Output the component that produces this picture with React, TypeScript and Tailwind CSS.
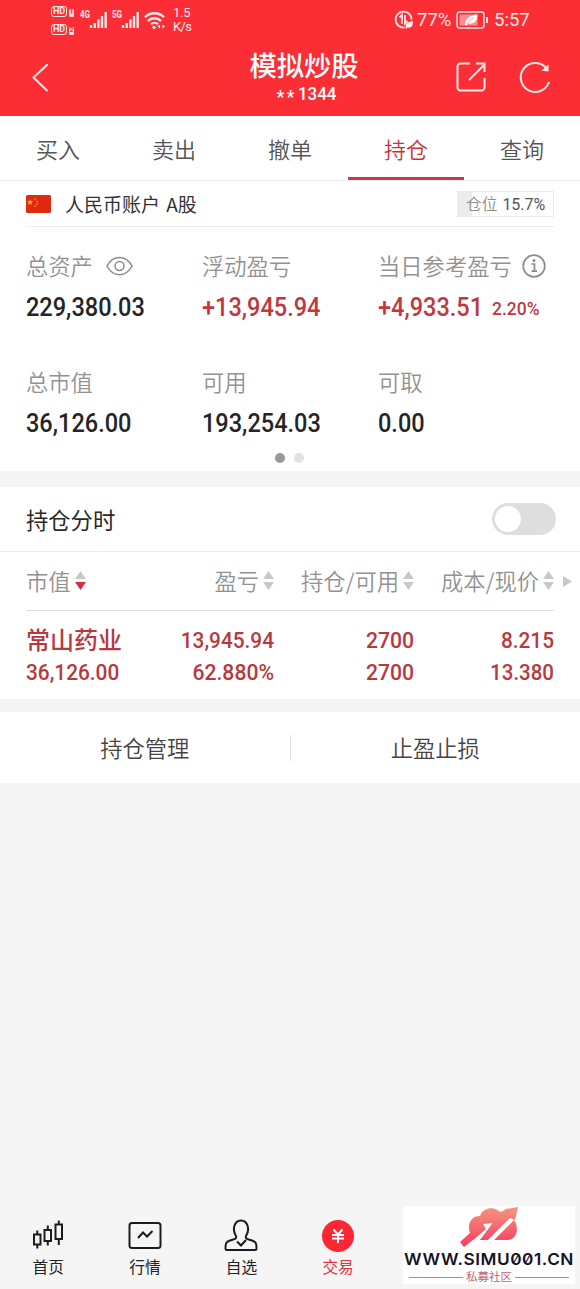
import type { ReactNode } from "react";

const tabs = ["买入", "卖出", "撤单", "持仓", "查询"];

function Num({ children, className = "" }: { children: ReactNode; className?: string }) {
  return (
    <span className={`inline-block whitespace-nowrap font-[Roboto,sans-serif] font-medium ${className}`}>
      {children}
    </span>
  );
}

function Signal({ label }: { label: string }) {
  return (
    <div className="flex w-8 items-start">
      <span className="mt-[-1px] inline-block w-[9px] origin-left scale-x-[0.8] text-[10px] leading-[10px] font-bold">
        {label}
      </span>
      <svg width="18" height="18" viewBox="0 0 18 18" fill="none" stroke="currentColor" strokeWidth="2.400">
        <path d="M2 14v3M5.800 12v5M9.400 8.500v8.500M13 5v12M16.700 1v16" />
      </svg>
    </div>
  );
}

function HdBadge({ n }: { n: string }) {
  return (
    <div className="flex h-[11px] items-end gap-[2px]">
      <span className="flex h-[11px] w-4 items-center justify-center rounded-[3px] border-[1.5px] border-[#ffe9e9] text-[9px] leading-none font-bold">
        HD
      </span>
      <span className="flex h-2 w-[5px] items-center justify-center rounded-[1px] bg-[#ffdcdc] text-[7px] leading-none font-bold text-[#fb2e36]">
        {n}
      </span>
    </div>
  );
}

function StatusBar() {
  return (
    <div className="flex h-10 items-center pl-[51px] font-[Roboto,sans-serif] text-[#ffe9e9]">
      <div className="flex w-[29px] flex-col gap-[7px]">
        <HdBadge n="1" />
        <HdBadge n="2" />
      </div>
      <Signal label="4G" />
      <Signal label="5G" />
      <svg width="22" height="20" viewBox="0 0 22 20" fill="none" stroke="currentColor" strokeWidth="2.300">
        <path d="M1 7.200c5-5.300 14-5.300 19 0M4 11c3.600-3.700 9.400-3.700 13 0M7 14.300c2-2 5-2 7 0" />
        <circle cx="10" cy="17.300" r="1.600" fill="currentColor" stroke="none" />
        <path d="M13.500 16.500l2.500-2v4zM21 16.500l-2.500-2v4z" fill="currentColor" stroke="none" />
      </svg>
      <div className="ml-[7px] w-[221px] text-[13px] leading-[14px]">
        <div className="tracking-[-0.3px]">1.5</div>
        <div className="tracking-[-0.6px]">K/s</div>
      </div>
      <svg width="20" height="20" viewBox="0 0 20 20" fill="none" stroke="currentColor" strokeWidth="1.800">
        <path d="M10.500 17.500A8 8 0 1 1 17.600 9.500" />
        <path d="M5.500 7.500L8 5v9M11 5v8.500l2.500-2.500" />
        <path d="M11.500 17.500c0-4 2.500-6 7.500-6.500c.3 5-2 7.500-5.500 6.500l-1.500 1.500z" fill="currentColor" stroke="none" />
      </svg>
      <span className="ml-[3px] w-[39px] text-[18.500px] leading-5">77%</span>
      <svg width="33" height="18" viewBox="0 0 33 18" fill="none" stroke="currentColor">
        <rect x="1" y="1" width="27" height="16" rx="2.500" strokeWidth="1.400" />
        <path d="M3.500 3.500h18v11h-18z" fill="#ff8c90" stroke="none" />
        <path d="M9 14c.5-6 4-10 12.500-10.500c0 7-4 10-9.500 9l-1.500 2z" fill="#fff" stroke="none" />
        <path d="M11 13c2-3.500 4-5 7-6.500" stroke="#ff8c90" strokeWidth=".8" />
        <path d="M31 6v6" strokeWidth="2" />
      </svg>
      <span className="ml-[5px] text-[18.500px] leading-5">5:57</span>
    </div>
  );
}

function Header() {
  return (
    <header className="h-[116px] border-b border-[#dc3a43] bg-[#fb2e36] text-white">
      <StatusBar />
      <div className="flex h-[75px] items-center">
        <svg className="ml-8" width="18" height="30" viewBox="0 0 18 30" fill="none" stroke="#ffeaea" strokeWidth="2">
          <path d="M15.500 1.500L1.500 14.500L15.500 28" />
        </svg>
        <div className="-mt-1 ml-[199px] flex w-[110px] flex-col items-center">
          <h1 className="text-[27.300px] leading-[36px] font-medium whitespace-nowrap">模拟炒股</h1>
          <p className="ml-[3px] flex h-6 items-center font-[Roboto,sans-serif] text-[18px] leading-6 font-medium">
            <span className="mt-1.5 mr-0.5 tracking-[2px]">**</span>
            <span className="w-[36px] origin-left scale-x-[0.94]">1344</span>
          </p>
        </div>
        <div className="-mt-0.5 ml-[96px] flex gap-8">
          <svg width="32" height="32" viewBox="0 0 32 32" fill="none" stroke="#ffeaea" strokeWidth="2">
            <path d="M15 2.500H5.500a3 3 0 0 0-3 3v21a3 3 0 0 0 3 3h21a3 3 0 0 0 3-3V17M14 19L29 4M21 2.500h8.500V11" />
          </svg>
          <svg width="32" height="32" viewBox="0 0 32 32" fill="none" stroke="#ffeaea" strokeWidth="2">
            <path d="M30 21A14.500 14.500 0 1 1 28 8" />
            <path d="M29.500 3.500v7l-7-.8z" fill="#ffeaea" stroke="none" />
          </svg>
        </div>
      </div>
    </header>
  );
}

function Sort({ active = false }: { active?: boolean }) {
  return (
    <svg className="ml-1" width="11" height="20" viewBox="0 0 11 20">
      <path d="M5.500 0L11 8H0z" fill="#c8c8c8" />
      <path d="M0 11h11l-5.500 8z" fill={active ? "#d2303f" : "#c8c8c8"} />
    </svg>
  );
}

function Stat({ label, value, red, icon, extra }: {
  label: string;
  value: string;
  red?: boolean;
  icon?: ReactNode;
  extra?: string;
}) {
  return (
    <div className={red ? "text-[#c3373c]" : "text-[#252525]"}>
      <div className="-mt-px flex h-8 items-center text-[22.300px] font-[350] whitespace-nowrap text-[#929292]">
        {label}
        {icon}
      </div>
      <div className="mt-[9px] flex h-8 items-center">
        <Num className="origin-left scale-x-[0.905] text-[26px]">{value}</Num>
        {extra && <Num className="-ml-0.5 origin-left scale-x-[0.92] pt-1 text-[19px]">{extra}</Num>}
      </div>
    </div>
  );
}

function Account() {
  return (
    <section className="h-[290px] bg-white">
      <div className="mx-[26px] flex h-[46px] items-center border-b border-[#ededed]">
        <svg width="25" height="18" viewBox="0 0 25 18">
          <rect width="25" height="18" rx="1.500" fill="#de2a10" />
          <path d="M4 4l.8 2.200h2.300l-1.800 1.400.7 2.300-2-1.400-2 1.400.7-2.300L.9 6.200h2.300z" fill="#ffb52e" />
          <g fill="#f07a20">
            <circle cx="9" cy="4" r=".9" />
            <circle cx="11" cy="6.500" r=".9" />
            <circle cx="11" cy="9" r=".9" />
            <circle cx="9" cy="11" r=".9" />
          </g>
        </svg>
        <span className="ml-3.5 pt-0.5 text-[19px] text-[#333] [word-spacing:2px]">人民币账户 A股</span>
        <span className="ml-auto flex h-[26px] w-[97px] items-center border border-[#ebebeb] bg-linear-to-r from-[#ececec] from-15% to-white to-15% pl-2 text-[15.700px] whitespace-nowrap text-[#8b8b8b]">
          <span className="font-[350]">仓位</span>
          <span className="ml-[5px] pt-0.5 font-[Roboto,sans-serif] text-[16px] text-[#555]">15.7%</span>
        </span>
      </div>
      <div className="grid grid-cols-[176px_176px_1fr] gap-y-[44px] pt-6 pl-[26px]">
        <Stat
          label="总资产"
          value="229,380.03"
          icon={
            <svg className="ml-[13px]" width="27" height="20" viewBox="0 0 27 20" fill="none" stroke="#8b8b8b" strokeWidth="1.500">
              <path d="M1 10C7-1.500 20-1.500 26 10C20 21.500 7 21.500 1 10z" />
              <circle cx="13.500" cy="10" r="4.500" />
            </svg>
          }
        />
        <Stat label="浮动盈亏" value="+13,945.94" red />
        <Stat
          label="当日参考盈亏"
          value="+4,933.51"
          red
          extra="2.20%"
          icon={
            <svg className="ml-[10px]" width="24" height="24" viewBox="0 0 24 24" fill="none" stroke="#8b8b8b" strokeWidth="1.700">
              <circle cx="12" cy="12" r="10.800" />
              <path d="M9.500 10h3v7M9.500 17.200h5.500" />
              <circle cx="12" cy="6.600" r="1.500" fill="#8b8b8b" stroke="none" />
            </svg>
          }
        />
        <Stat label="总市值" value="36,126.00" />
        <Stat label="可用" value="193,254.03" />
        <Stat label="可取" value="0.00" />
      </div>
      <div className="mt-[14px] mr-0.5 flex justify-center gap-[9px]">
        <i className="size-2.5 rounded-full bg-[#999]" />
        <i className="size-2.5 rounded-full bg-[#e2e2e2]" />
      </div>
    </section>
  );
}

function Holdings() {
  return (
    <section className="h-[212px] bg-white">
      <div className="flex h-[65px] items-center justify-between border-b border-[#ededed] pr-6 pl-[26px]">
        <span className="pt-0.5 text-[22.300px] text-[#292929]">持仓分时</span>
        <button role="switch" aria-checked="false" className="h-8 w-16 rounded-full bg-[#dedede] p-[3px]">
          <span className="block size-[26px] rounded-full bg-white" />
        </button>
      </div>
      <div className="flex h-[58px] items-center pl-[26px] text-[22.300px] font-[350] whitespace-nowrap text-[#929292]">
        <span className="flex w-[120px] items-center">市值<Sort active /></span>
        <span className="flex w-[128px] items-center justify-end">盈亏<Sort /></span>
        <span className="flex w-[140px] items-center justify-end">持仓/可用<Sort /></span>
        <span className="flex w-[140px] items-center justify-end">成本/现价<Sort /></span>
        <svg className="ml-[9px]" width="9" height="11" viewBox="0 0 9 11">
          <path d="M0 0l9 5.500L0 11z" fill="#c8c8c8" />
        </svg>
      </div>
      <div className="mx-[26px] grid h-[88px] grid-cols-[108px_140px_140px_140px] content-start border-t border-[#dedede] pt-[13px] text-[22.500px] leading-8 text-[#b9383e]">
        <span className="-mt-px text-[24px] leading-8 font-medium">常山药业</span>
        <Num className="origin-right scale-x-[0.925] text-right">13,945.94</Num>
        <Num className="origin-right scale-x-[0.94] text-right">2700</Num>
        <Num className="origin-right scale-x-[0.925] text-right">8.215</Num>
        <Num className="origin-left scale-x-[0.925]">36,126.00</Num>
        <Num className="origin-right scale-x-[0.94] text-right">62.880%</Num>
        <Num className="origin-right scale-x-[0.94] text-right">2700</Num>
        <Num className="origin-right scale-x-[0.91] text-right">13.380</Num>
      </div>
    </section>
  );
}

function NavItem({ label, active, children }: { label: string; active?: boolean; children: ReactNode }) {
  return (
    <a className={`flex w-[96.600px] flex-col items-center text-[15.700px] leading-6 ${active ? "text-[#e5303b]" : "text-[#222]"}`}>
      <svg width="34" height="34" viewBox="0 0 34 34" fill="none" stroke="#1c1c1c" strokeWidth="2">
        {children}
      </svg>
      <span className="mt-0.5">{label}</span>
    </a>
  );
}

function Watermark() {
  return (
    <div className="mt-[3px] ml-[16.600px] h-[78px] w-[172px] bg-white">
      <svg className="block" width="172" height="64" viewBox="0 0 172 64">
        <defs>
          <linearGradient id="cloud" gradientUnits="userSpaceOnUse" x1="0" y1="3" x2="0" y2="40">
            <stop offset="0" stopColor="#f5917f" />
            <stop offset="1" stopColor="#f63d60" />
          </linearGradient>
        </defs>
        <path
          d="M57 36L67 27C64 18 68 10 77 10C80 1 92 0 97 6C101 4 106 5 108 9L111 14C116 21 115 33 105 34H70L61 41z"
          fill="url(#cloud)"
        />
        <path d="M69 35L83 23L80 18L91 17L88 27L85.500 25L76 35z" fill="#fff" />
        <path d="M86 36L110 12" stroke="#fff" strokeWidth="4.500" />
        <path d="M97 7L103 3L115 1L112 14L107 12L83 34H77z" fill="url(#cloud)" />
        <text
          x="1"
          y="58.500"
          textLength="170"
          lengthAdjust="spacingAndGlyphs"
          fontSize="16"
          fill="#171326"
          className="font-[Inter,sans-serif] font-semibold tracking-[0.5px] slashed-zero"
        >
          WWW.SIMU001.CN
        </text>
      </svg>
      <div className="flex h-3.5 items-center justify-center gap-[3px] text-[11.500px] leading-none whitespace-nowrap text-[#bd6670]">
        <i className="h-px w-[54px] bg-[#d47b80]" />
        私募社区
        <i className="h-px w-[54px] bg-[#d47b80]" />
      </div>
    </div>
  );
}

export default function App() {
  return (
    <main className="flex h-[1289px] w-[580px] flex-col overflow-hidden bg-[#f5f5f5] font-['Noto_Sans_CJK_SC',sans-serif]">
      <Header />
      <nav className="grid h-[65px] shrink-0 grid-cols-5 border-b border-[#ededed] bg-white text-[22px]">
        {tabs.map((tab) => (
          <a
            key={tab}
            className={`flex items-center justify-center border-b-[3px] pt-[3px] font-[350] ${
              tab === "持仓" ? "border-[#c33d43] text-[#cb3339]" : "border-transparent text-[#555]"
            }`}
          >
            {tab}
          </a>
        ))}
      </nav>
      <Account />
      <div className="h-4" />
      <Holdings />
      <section className="mt-[13px] flex h-[71px] items-center bg-white text-[22.300px] font-[350] text-[#444]">
        <span className="flex-1 text-center">持仓管理</span>
        <i className="h-[26px] w-px bg-[#e2e2e2]" />
        <span className="flex-1 text-center">止盈止损</span>
      </section>
      <footer className="mt-auto flex h-[86px] items-start">
        <div className="flex pt-4">
          <NavItem label="首页">
            <path d="M3 15.500h6.500v10H3zM13.500 11h6.500v11h-6.500zM24.500 5.500h6.500V20h-6.500zM6.300 11.500v4M6.300 25.500v4M16.800 6.500V11M16.800 22v4.500M27.800 1.500v4M27.800 20v6" />
          </NavItem>
          <NavItem label="行情">
            <rect x="1.500" y="4" width="31" height="25" rx="2.500" />
            <path d="M10 19l5-5.500 4 4 5.500-5.500" />
          </NavItem>
          <NavItem label="自选">
            <path d="M12 17C8 11 10 1.500 17 1.500S26 11 22 17C21 20 24 20 28 21.500C32 23 32.500 24 32.500 29.500Q32.500 31 31 31H3Q1.500 31 1.500 29.500C1.500 24 2 23 6 21.500C10 20 13 20 12 17z" />
            <path d="M13 22.500l4 4 5-5.500" />
          </NavItem>
          <NavItem label="交易" active>
            <circle cx="17" cy="17" r="16" fill="#fb2735" stroke="none" />
            <path d="M12.500 10.500l4.500 5 4.500-5M11 16h12M11 19.500h12M17 15.500V24" stroke="#fff" />
          </NavItem>
        </div>
        <Watermark />
      </footer>
    </main>
  );
}
